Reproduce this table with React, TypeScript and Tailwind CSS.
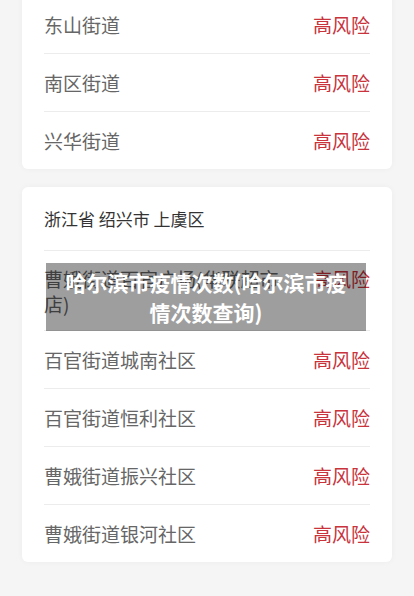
import React from "react";

const font = { fontFamily: '"Noto Sans CJK SC", "Noto Sans", sans-serif' };

function Row({ name, first, tall }: { name: string; first?: boolean; tall?: boolean }) {
  return (
    <div
      className={`flex items-start justify-between gap-[12px] text-[19px] leading-[25px] ${
        tall ? "py-[14.5px]" : "py-[16px]"
      } ${first ? "" : "border-t border-[#ececec]"}`}
    >
      <div className="min-w-0 flex-1 text-[#666666]">{name}</div>
      <div className="shrink-0 text-[#c8333c]">高风险</div>
    </div>
  );
}

export default function App() {
  return (
    <div className="relative min-h-[596px] overflow-hidden bg-[#f5f5f5]" style={font}>
      <div className="-mt-[4px] flex flex-col gap-[18px] px-[22px] pb-[40px]">
        <div className="rounded-b-md bg-white px-[22px] shadow-[0_0_6px_rgba(0,0,0,0.04)]">
          <Row name="东山街道" first />
          <Row name="南区街道" />
          <Row name="兴华街道" />
        </div>
        <div className="rounded-md bg-white px-[22px] shadow-[0_0_6px_rgba(0,0,0,0.04)]">
          <div className="py-[20px] text-[17px] leading-[23px] text-[#333333]">浙江省 绍兴市 上虞区</div>
          <Row name="曹娥街道百官广场(华联超市店)" tall />
          <Row name="百官街道城南社区" />
          <Row name="百官街道恒利社区" />
          <Row name="曹娥街道振兴社区" />
          <Row name="曹娥街道银河社区" />
        </div>
      </div>
      <div className="absolute left-[46px] top-[263px] flex h-[68px] w-[320px] items-center justify-center bg-[rgba(0,0,0,0.38)] px-[10px] text-center text-[21px] font-bold leading-[30px] text-white">
        哈尔滨市疫情次数(哈尔滨市疫情次数查询)
      </div>
    </div>
  );
}
